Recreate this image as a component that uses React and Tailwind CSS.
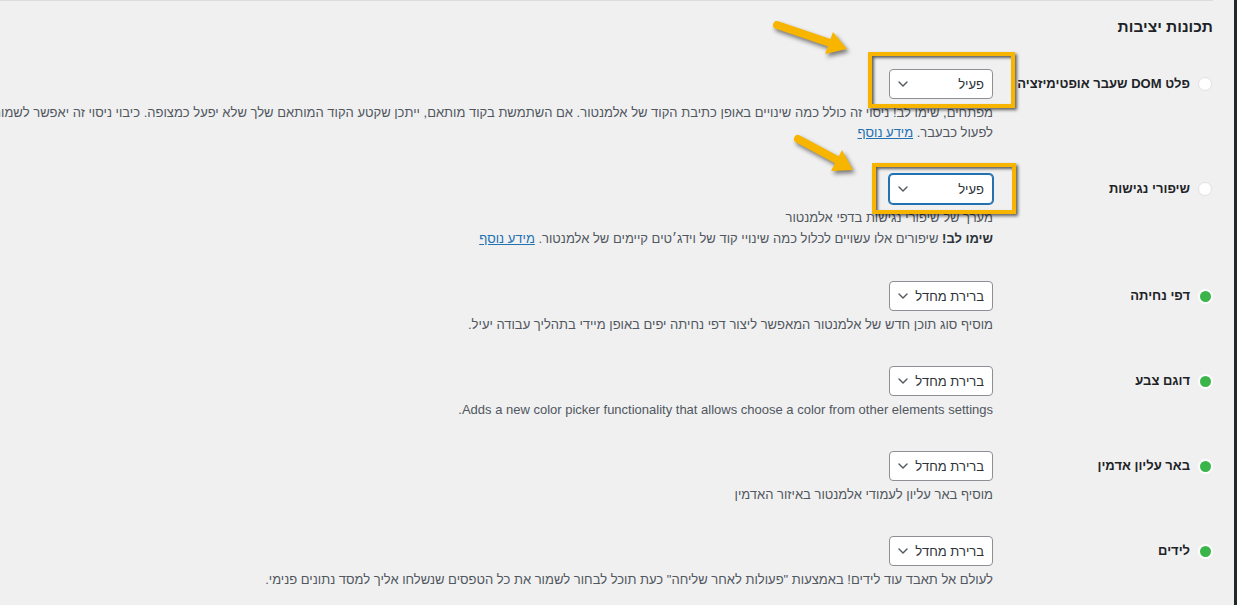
import React from 'react';

const Chevron = () => (
  <svg width="10" height="6" viewBox="0 0 10 6" fill="none" className="shrink-0">
    <path d="M1 1l4 4 4-4" stroke="#50575e" strokeWidth="1.4" strokeLinecap="round" strokeLinejoin="round" />
  </svg>
);

const Select = ({ value, focused }) => (
  <div
    className={
      focused
        ? 'w-[104px] h-[30px] bg-white rounded-[4px] border border-[#2271b1] shadow-[0_0_0_1px_#2271b1] flex items-center justify-between pr-[8px] pl-[8px] text-[13px] text-[#2c3338]'
        : 'w-[104px] h-[30px] bg-white rounded-[4px] border border-[#8c8f94] flex items-center justify-between pr-[8px] pl-[8px] text-[13px] text-[#2c3338]'
    }
  >
    <span className="leading-none">{value}</span>
    <Chevron />
  </div>
);

const Row = ({ label, active, value, focused, children }) => (
  <div className="flex pt-[15px] pb-[16px]">
    <div className="w-[220px] shrink-0 h-[30px] flex items-center gap-[8px]">
      {active ? (
        <span className="w-[15px] h-[15px] rounded-full bg-[#39b54a] border-2 border-white shrink-0" />
      ) : (
        <span className="w-[14px] h-[14px] mr-[1px] rounded-full bg-white border border-[#e2e2e4] shrink-0" />
      )}
      <span className="text-[13px] font-bold text-[#1d2327] whitespace-nowrap">{label}</span>
    </div>
    <div className="flex-1 min-w-0">
      <Select value={value} focused={focused} />
      <div className="mt-[4px] text-[13px] leading-[20px] text-[#50575e]">{children}</div>
    </div>
  </div>
);

const Link = ({ children }) => (
  <a href="#" className="text-[#2271b1] underline">{children}</a>
);

export default function App() {
  return (
    <div
      dir="rtl"
      className="relative w-[1237px] h-[605px] overflow-hidden bg-[#f0f0f1] flex font-['Liberation_Sans',Arial,sans-serif]"
    >
      <div className="w-[3px] h-full bg-[#23282d] shrink-0" />
      <div className="w-[21px] shrink-0" />
      <div className="w-[1213px] shrink-0 border-t border-[#dcdcde]">
        <h2 className="pt-[16px] text-[15.5px] leading-[20px] font-bold text-[#1d2327]">תכונות יציבות</h2>
        <div className="pt-[17px]">
          <Row label="פלט DOM שעבר אופטימיזציה" value="פעיל">
            <div className="whitespace-nowrap">
              מפתחים, שימו לב! ניסוי זה כולל כמה שינויים באופן כתיבת הקוד של אלמנטור. אם השתמשת בקוד מותאם, ייתכן שקטע הקוד המותאם שלך שלא יפעל כמצופה. כיבוי ניסוי זה יאפשר לשמור על הקוד המותאם שלך ולגרום לו
            </div>
            <div>
              לפעול כבעבר. <Link>מידע נוסף</Link>
            </div>
          </Row>
          <Row label="שיפורי נגישות" value="פעיל" focused>
            <div>מערך של שיפורי נגישות בדפי אלמנטור</div>
            <div className="leading-[22px]">
              <b className="text-[#2c3338]">שימו לב!</b> שיפורים אלו עשויים לכלול כמה שינויי קוד של וידג׳טים קיימים של אלמנטור. <Link>מידע נוסף</Link>
            </div>
          </Row>
          <Row label="דפי נחיתה" value="ברירת מחדל" active>
            מוסיף סוג תוכן חדש של אלמנטור המאפשר ליצור דפי נחיתה יפים באופן מיידי בתהליך עבודה יעיל.
          </Row>
          <Row label="דוגם צבע" value="ברירת מחדל" active>
            Adds a new color picker functionality that allows choose a color from other elements settings.
          </Row>
          <Row label="באר עליון אדמין" value="ברירת מחדל" active>
            מוסיף באר עליון לעמודי אלמנטור באיזור האדמין
          </Row>
          <Row label="לידים" value="ברירת מחדל" active>
            לעולם אל תאבד עוד לידים! באמצעות "פעולות לאחר שליחה" כעת תוכל לבחור לשמור את כל הטפסים שנשלחו אליך למסד נתונים פנימי.
          </Row>
        </div>
      </div>

      {/* annotation boxes */}
      <div className="absolute left-[868px] top-[52px] w-[147px] h-[56px] border-4 border-[#f7b500] shadow-[2px_2px_3px_rgba(0,0,0,0.6),inset_2px_2px_3px_rgba(0,0,0,0.6)] pointer-events-none" />
      <div className="absolute left-[872px] top-[163px] w-[144px] h-[51px] border-4 border-[#f7b500] shadow-[2px_2px_3px_rgba(0,0,0,0.6),inset_2px_2px_3px_rgba(0,0,0,0.6)] pointer-events-none" />

      {/* annotation arrows */}
      <svg
        className="absolute left-0 top-0 pointer-events-none drop-shadow-[2px_3px_2px_rgba(0,0,0,0.5)]"
        width="1237"
        height="605"
        viewBox="0 0 1237 605"
      >
        <line x1="777" y1="25" x2="833" y2="44" stroke="#f7b500" strokeWidth="8" strokeLinecap="round" />
        <polygon points="847,49 825,54 833,32" fill="#f7b500" />
        <line x1="798" y1="139" x2="841" y2="162" stroke="#f7b500" strokeWidth="8" strokeLinecap="round" />
        <polygon points="853,170 831,171 842,150" fill="#f7b500" />
      </svg>
    </div>
  );
}
